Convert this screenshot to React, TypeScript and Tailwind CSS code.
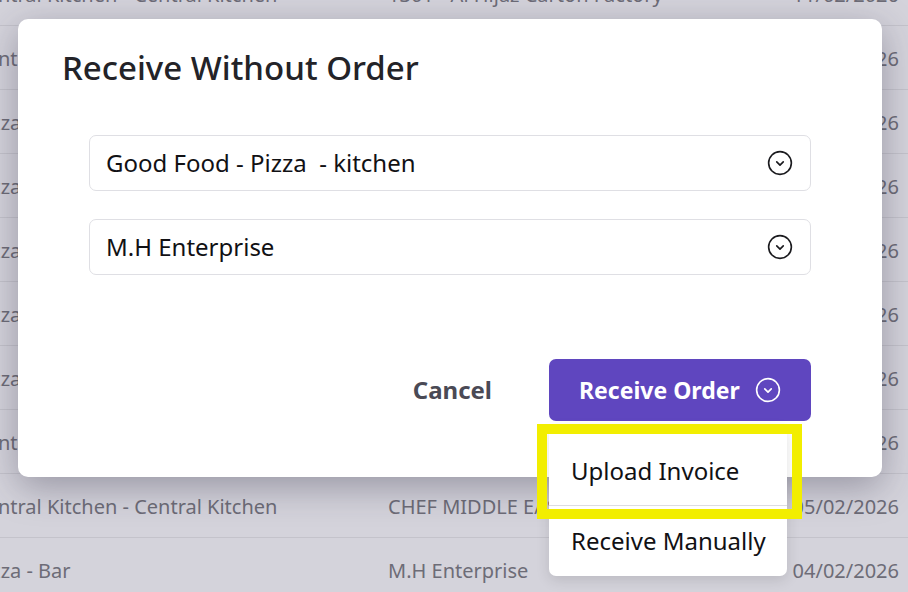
import React from "react";

type Row = { location: string; supplier: string; date: string };

const rows: Row[] = [
  { location: "Central Kitchen - Central Kitchen", supplier: "1301 - Al Hijaz Carton Factory", date: "11/02/2026" },
  { location: "Central Kitchen - Central Kitchen", supplier: "CHEF MIDDLE EAST", date: "10/02/2026" },
  { location: "Pizza - kitchen", supplier: "M.H Enterprise", date: "10/02/2026" },
  { location: "Pizza - kitchen", supplier: "M.H Enterprise", date: "09/02/2026" },
  { location: "Pizza - Bar", supplier: "M.H Enterprise", date: "08/02/2026" },
  { location: "Pizza - kitchen", supplier: "M.H Enterprise", date: "07/02/2026" },
  { location: "Pizza - Bar", supplier: "M.H Enterprise", date: "06/02/2026" },
  { location: "Central Kitchen - Central Kitchen", supplier: "CHEF MIDDLE EAST", date: "06/02/2026" },
  { location: "Central Kitchen - Central Kitchen", supplier: "CHEF MIDDLE EAST", date: "05/02/2026" },
  { location: "Pizza - Bar", supplier: "M.H Enterprise", date: "04/02/2026" },
];

const CircleChevron = ({ className }: { className?: string }) => (
  <svg
    viewBox="0 0 24 24"
    fill="none"
    stroke="currentColor"
    strokeWidth={1.5}
    strokeLinecap="round"
    strokeLinejoin="round"
    className={className}
  >
    <circle cx="12" cy="12" r="10.5" />
    <path d="M9 11l3 3 3-3" />
  </svg>
);

const SelectBox = ({ value }: { value: string }) => (
  <div className="h-[56px] border border-[#dfdfe4] rounded-[7px] pl-[16px] pr-[17px] flex items-center justify-between text-[24px] text-[#111114]">
    <span className="whitespace-pre">{value}</span>
    <CircleChevron className="w-[26px] h-[26px] text-[#1a1a1e]" />
  </div>
);

export default function App() {
  return (
    <div className="relative w-[908px] h-[592px] overflow-hidden bg-[#d4d3db] font-['Noto_Sans',sans-serif]">
      {/* table behind the backdrop */}
      <div className="flex flex-col -mt-[38px]">
        {rows.map((row, i) => (
          <div
            key={i}
            className="h-[64px] shrink-0 border-b border-[#c4c3cb] flex items-center pt-[2px] text-[20px] text-[#6d6c77] whitespace-nowrap"
          >
            <div className="-ml-[26px] w-[414px] shrink-0">{row.location}</div>
            <div className="flex-1">{row.supplier}</div>
            <div className="pr-[9px]">{row.date}</div>
          </div>
        ))}
      </div>

      {/* modal */}
      <div className="absolute left-[18px] top-[19px] w-[864px] h-[458px] bg-white rounded-[10px] shadow-[0_10px_36px_rgba(40,38,60,0.35)]">
        <h2 className="pt-[27px] pl-[44px] text-[33px] leading-[44px] font-medium text-[#232328]">
          Receive Without Order
        </h2>

        <div className="mx-[71px] mt-[45px] flex flex-col gap-[28px]">
          <SelectBox value="Good Food - Pizza  - kitchen" />
          <SelectBox value="M.H Enterprise" />
        </div>

        <div className="mt-[84px] mr-[71px] flex justify-end items-center">
          <button className="mr-[57px] text-[24px] font-bold text-[#4a4a55]">Cancel</button>
          <div className="relative">
            <button className="h-[62px] w-[262px] bg-[#5f46bf] rounded-[7px] text-white text-[23px] font-bold pl-[30px] flex items-center gap-[15px]">
              Receive Order
              <CircleChevron className="w-[26px] h-[26px]" />
            </button>

            {/* dropdown */}
            <div className="absolute left-0 top-full mt-[5px] w-[238px] bg-white rounded-[7px] pt-[10px] shadow-[0_4px_14px_rgba(0,0,0,0.12)] z-10">
              <div className="h-[70px] border-b border-[#dcdce2] flex items-center pl-[22px] text-[24px] text-[#111114]">
                Upload Invoice
              </div>
              <div className="h-[70px] flex items-center pl-[22px] text-[24px] text-[#111114]">
                Receive Manually
              </div>
            </div>

            {/* highlight */}
            <div className="absolute -left-[12px] top-full mt-[3px] w-[265px] h-[95px] border-[10px] border-[#f2ee00] z-20" />
          </div>
        </div>
      </div>
    </div>
  );
}
